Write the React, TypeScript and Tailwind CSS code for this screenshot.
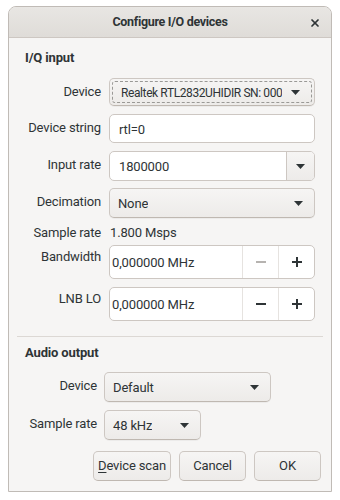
import { X } from "lucide-react"

const Caret = () => (
    <svg width="9" height="5" viewBox="0 0 9 5" className="shrink-0 fill-[#2e3436]">
        <path d="M0 0h9L4.5 5z" />
    </svg>
)

const Combo = ({ value, className, focus, textClass = "" }: { value: string; className: string; focus?: boolean; textClass?: string }) => (
    <div className={`flex min-w-0 items-center rounded-[5px] border border-[#cdc7c2] border-b-[#bfb8b1] bg-gradient-to-b from-[#f6f5f4] to-[#edebe9] shadow-[0_1px_0_rgba(0,0,0,0.04)] ${className}`}>
        <div className={`flex min-w-0 flex-1 items-center justify-between self-stretch whitespace-nowrap pl-[8px] pr-[11px] ${focus ? "m-[2px] rounded-[3px] border border-dashed border-[#9a9996] pl-[5px] pr-[6px]" : ""}`}>
            <span className={`overflow-hidden pt-[2px] ${textClass}`}>{value}</span>
            <Caret />
        </div>
    </div>
)

const Spin = ({ value, minusOff }: { value: string; minusOff?: boolean }) => (
    <div className="flex h-[34px] rounded-[5px] border border-[#cdc7c2] bg-white">
        <div className="flex flex-1 items-center pl-[2px] pt-[2px]">{value}</div>
        <div className="flex w-[36px] items-center justify-center border-l border-[#e6e3e0]">
            <span className={`h-[2px] w-[10px] ${minusOff ? "bg-[#b6b3b0]" : "bg-[#2e3436]"}`} />
        </div>
        <div className="relative flex w-[36px] items-center justify-center border-l border-[#e6e3e0]">
            <span className="h-[2px] w-[10px] bg-[#2e3436]" />
            <span className="absolute h-[10px] w-[2px] bg-[#2e3436]" />
        </div>
    </div>
)

const Label = ({ children, className = "" }: { children: string; className?: string }) => (
    <div className={`whitespace-nowrap text-right ${className}`}>{children}</div>
)

const Button = ({ children, className }: { children: React.ReactNode; className: string }) => (
    <div className={`flex h-[30px] items-center justify-center rounded-[5px] border border-[#cdc7c2] border-b-[#bfb8b1] bg-gradient-to-b from-[#f6f5f4] to-[#edebe9] ${className}`}>
        {children}
    </div>
)

export default function App() {
    return (
        <div className="h-[500px] w-[340px] bg-white pt-[6px] pl-[8px] text-[13px] tracking-[-0.15px] text-[#2e3436]" style={{ fontFamily: "Roboto, 'Noto Sans', sans-serif" }}>
            <div className="flex h-[486px] w-[324px] flex-col overflow-hidden rounded-t-[8px] border border-[#c0bbb6] bg-[#f6f5f4]">
                <div className="relative flex h-[31px] shrink-0 items-center justify-center border-b border-[#cdc7c2] bg-gradient-to-b from-[#e8e6e3] to-[#dfdcd8]">
                    <span className="text-[12.5px] font-bold tracking-[-0.3px]">Configure I/O devices</span>
                    <X className="absolute right-[10px] top-[10px] size-[12px]" strokeWidth={3.5} />
                </div>

                <div className="px-[8px]">
                    <div className="pl-[8px] pr-[8px]">
                        <div className="mt-[12px] h-[16px] font-bold leading-[16px]">I/Q input</div>

                        <div className="mt-[12px] grid grid-cols-[76px_minmax(0,1fr)] gap-x-[8px]">
                            <Label className="pt-[4px]">Device</Label>
                            <Combo value="Realtek RTL2832UHIDIR SN: 000" className="h-[28px]" textClass="text-[12px] tracking-[-0.4px]" focus />

                            <Label className="mt-[8px] pt-[4px]">Device string</Label>
                            <div className="mt-[8px] flex h-[29px] items-center rounded-[5px] border border-[#cdc7c2] bg-white pl-[9px] pt-[2px]">rtl=0</div>

                            <Label className="mt-[8px] pt-[4px]">Input rate</Label>
                            <div className="mt-[8px] flex h-[30px] rounded-[5px] border border-[#cdc7c2] bg-white">
                                <div className="flex flex-1 items-center pl-[9px] pt-[2px]">1800000</div>
                                <div className="flex w-[28px] items-center justify-center rounded-r-[4px] border-l border-[#cdc7c2] bg-gradient-to-b from-[#f6f5f4] to-[#edebe9]">
                                    <Caret />
                                </div>
                            </div>

                            <Label className="mt-[7px] pt-[4px]">Decimation</Label>
                            <Combo value="None" className="mt-[7px] h-[30px]" />

                            <Label className="mt-[5px] h-[18px]">Sample rate</Label>
                            <div className="mt-[5px] h-[18px] pl-[1px]">1.800 Msps</div>

                            <Label className="mt-[4px] pt-[2px]">Bandwidth</Label>
                            <div className="mt-[4px]"><Spin value="0,000000 MHz" minusOff /></div>

                            <Label className="mt-[8px] pt-[2px]">LNB LO</Label>
                            <div className="mt-[8px]"><Spin value="0,000000 MHz" /></div>
                        </div>
                    </div>

                    <div className="mt-[15px] h-px bg-[#dcd8d4]" />

                    <div className="pl-[8px]">
                        <div className="mt-[8px] h-[16px] font-bold leading-[16px]">Audio output</div>

                        <div className="mt-[11px] grid grid-cols-[72px_auto_1fr] gap-x-[7px]">
                            <Label className="pt-[4px]">Device</Label>
                            <Combo value="Default" className="h-[30px] w-[167px]" />
                            <div />

                            <Label className="mt-[8px] pt-[4px]">Sample rate</Label>
                            <Combo value="48 kHz" className="mt-[8px] h-[30px] w-[97px]" />
                            <div />
                        </div>

                        <div className="mt-[11px] flex justify-end gap-[8px] pr-[2px]">
                            <Button className="w-[78px]"><span><span className="underline underline-offset-2">D</span>evice scan</span></Button>
                            <Button className="w-[67px]">Cancel</Button>
                            <Button className="w-[67px]">OK</Button>
                        </div>
                    </div>
                </div>
            </div>
        </div>
    )
}
